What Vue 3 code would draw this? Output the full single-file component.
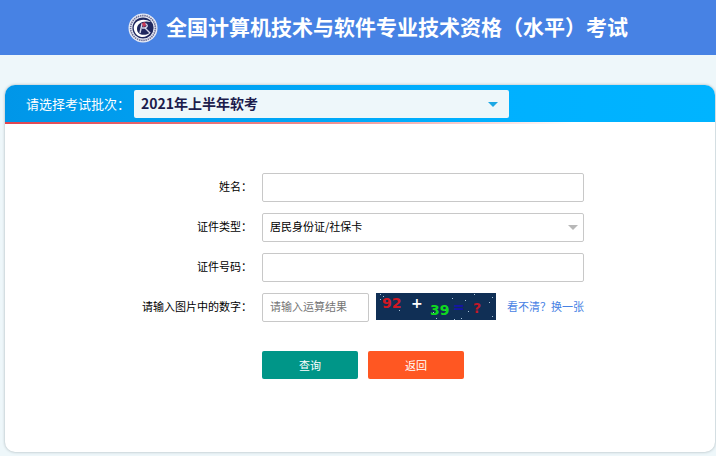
<template>
  <div class="page">
    <header class="header">
      <svg class="logo" viewBox="0 0 30 30" aria-hidden="true">
        <circle cx="15" cy="15" r="14.5" fill="#e6eaf5" />
        <circle cx="15" cy="15" r="12.4" fill="none" stroke="#6a6a92" stroke-width="1.6" stroke-dasharray="1.4 0.8" />
        <circle cx="15" cy="15" r="10.6" fill="#20285f" />
        <path d="M6 17C4 8 15 4 23 9C14 7 9 11 9 16C9 22 17 24 23 19C18 27 8 25 6 17Z" fill="#fff" />
        <path d="M12 20L14 11H18Q21 13 17 15L22 20M14 15H17" fill="none" stroke="#d4d6ea" stroke-width="1.4" />
        <path d="M14 10L17 9L18 13L15 14Z" fill="#c63a56" />
      </svg>
      <h1 class="title">全国计算机技术与软件专业技术资格（水平）考试</h1>
    </header>

    <main class="card">
      <div class="batch">
        <label for="batch" class="batch-label">请选择考试批次：</label>
        <div class="select-wrap batch-wrap">
          <select id="batch" v-model="batch" class="batch-select">
            <option>2021年上半年软考</option>
          </select>
        </div>
      </div>
      <div class="divider" />

      <form class="form" @submit.prevent>
        <div class="row">
          <label for="name">姓名：</label>
          <input id="name" v-model="form.name" class="control" type="text">
        </div>
        <div class="row">
          <label for="idType">证件类型：</label>
          <div class="select-wrap">
            <select id="idType" v-model="form.idType" class="control">
              <option>居民身份证/社保卡</option>
            </select>
          </div>
        </div>
        <div class="row">
          <label for="idNumber">证件号码：</label>
          <input id="idNumber" v-model="form.idNumber" class="control" type="text">
        </div>
        <div class="row">
          <label for="captcha">请输入图片中的数字：</label>
          <div class="captcha">
            <input id="captcha" v-model="form.captcha" class="control" type="text" placeholder="请输入运算结果">
            <svg class="captcha-img" viewBox="0 0 120 27">
              <rect width="120" height="27" fill="#102f55" />
              <rect
                v-for="(d, i) in dots"
                :key="i"
                :x="d[0]"
                :y="d[1]"
                width="1"
                height="1"
                fill="#a9c4da"
              />
              <text x="6" y="15" fill="#d01824">92</text>
              <text x="35" y="15" fill="#fff">+</text>
              <text x="54" y="22" fill="#10d820">39</text>
              <text x="77" y="19" fill="#1414a8">=</text>
              <text x="97" y="20" fill="#c01828">?</text>
            </svg>
            <a href="#" class="refresh">看不清？换一张</a>
          </div>
        </div>
        <div class="actions">
          <button type="submit" class="btn btn--query">查询</button>
          <button type="button" class="btn btn--back">返回</button>
        </div>
      </form>
    </main>
  </div>
</template>

<script setup>
import { reactive, ref } from 'vue'

const batch = ref('2021年上半年软考')

const form = reactive({
  name: '',
  idType: '居民身份证/社保卡',
  idNumber: '',
  captcha: ''
})

// captcha noise
const dots = [
  [4, 1], [7, 3], [4, 6], [8, 7], [23, 17], [57, 19], [60, 25], [76, 5],
  [78, 26], [89, 7], [92, 18], [98, 1], [99, 11], [113, 9], [116, 4], [69, 17],
  [85, 25], [116, 23]
]
</script>

<style>
body {
  margin: 0;
  background: #eef7fa;
}
</style>

<style scoped>
.page {
  font-family: 'Noto Sans CJK SC', sans-serif;
  font-size: 11px;
  color: #000;
}

.page * {
  box-sizing: border-box;
}

input,
select,
button {
  font-family: inherit;
  font-size: inherit;
}

.header {
  display: flex;
  align-items: center;
  justify-content: center;
  gap: 8px;
  height: 55px;
  padding-right: 88px;
  padding-left: 128px;
  background: #4782e4;
}

.logo {
  width: 30px;
  height: 30px;
  flex-shrink: 0;
}

.title {
  margin: 0;
  padding-bottom: 4px;
  font-size: 21px;
  line-height: 30px;
  font-weight: 700;
  color: #fff;
  white-space: nowrap;
}

.card {
  margin: 30px 1px 4px 5px;
  padding-bottom: 73px;
  background: #fff;
  border-radius: 10px;
  box-shadow: 0 0 3px #a4b0b6;
  overflow: hidden;
}

.batch {
  display: flex;
  align-items: center;
  height: 37px;
  padding-left: 21px;
  background: linear-gradient(90deg, #0096e8, #00b0ff 65%, #00b4ff);
}

.batch-label {
  width: 108px;
  flex-shrink: 0;
  font-size: 13px;
  color: #fff;
  white-space: nowrap;
}

.select-wrap {
  position: relative;
  width: 322px;
}

.select-wrap::after {
  content: '';
  position: absolute;
  right: 6px;
  top: 12px;
  border: 5px solid transparent;
  border-top-color: #b8b8b8;
  border-bottom: 0;
  pointer-events: none;
}

.batch-wrap {
  width: 375px;
}

.batch-wrap::after {
  right: 11px;
  border-top-color: #1ca8e4;
}

.batch-select {
  display: block;
  width: 100%;
  height: 28px;
  padding: 0 7px 2px;
  border: 0;
  border-radius: 2px;
  background: #eef7fa;
  font-size: 14px;
  font-weight: 700;
  color: #1c1c4c;
  appearance: none;
}

.divider {
  height: 2px;
  background: linear-gradient(90deg, #e04450, #f08c8c 45%, #fff 80%);
}

.form {
  display: flex;
  flex-direction: column;
  gap: 11px;
  padding-top: 49px;
}

.row {
  display: grid;
  grid-template-columns: 247px 322px;
  column-gap: 10px;
  align-items: center;
}

.row label {
  padding-bottom: 3px;
  text-align: right;
  white-space: nowrap;
}

.control {
  display: block;
  width: 100%;
  height: 29px;
  padding: 0 7px 3px;
  border: 1px solid #c8c8c8;
  border-radius: 2px;
  background: #fff;
  color: #000;
  appearance: none;
}

.control::placeholder {
  color: #757575;
}

.captcha {
  display: flex;
  align-items: flex-start;
}

.captcha .control {
  width: 107px;
}

.captcha-img {
  width: 120px;
  height: 27px;
  margin: 0 11px 0 7px;
  flex-shrink: 0;
}

.captcha-img text {
  font-family: 'DejaVu Sans', sans-serif;
  font-size: 14px;
  font-weight: 700;
}

.refresh {
  line-height: 26px;
  color: #4782e4;
  text-decoration: none;
  white-space: nowrap;
}

.actions {
  display: flex;
  gap: 10px;
  margin-top: 18px;
  padding-left: 257px;
}

.btn {
  width: 96px;
  height: 28px;
  padding: 0;
  border: 0;
  border-radius: 2px;
  color: #fff;
  cursor: pointer;
}

.btn--query { background: #009688; }
.btn--back  { background: #ff5722; }
</style>
